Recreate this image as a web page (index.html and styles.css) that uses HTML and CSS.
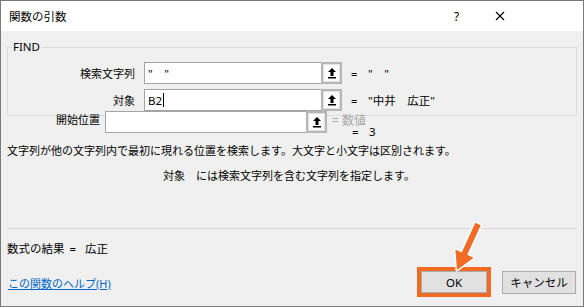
FILE: index.html
```html
<!DOCTYPE html>
<html lang="ja">
<head>
  <meta charset="UTF-8" />
  <title>関数の引数</title>
  <link rel="stylesheet" href="styles.css">
</head>
<body>
  <div class="window">
    <div class="titlebar">
      <span class="title">関数の引数</span>
      <span class="help-btn">?</span>
      <span class="close-btn">
        <svg width="10" height="10" viewBox="0 0 10 10"><path d="M1 1 L9 9 M9 1 L1 9" stroke="#000" stroke-width="1.1" fill="none"/></svg>
      </span>
    </div>

    <div class="content">
      <fieldset class="group">
        <legend>FIND</legend>
        <div class="arg-row">
          <label class="arg-label">検索文字列</label>
          <div class="arg-input">"　"</div>
          <div class="ref-btn">
            <svg width="10" height="12" viewBox="0 0 10 12"><path d="M5 1 L9 5 H6.5 V9 H3.5 V5 H1 Z" fill="#000"/><rect x="1" y="10" width="8" height="1.5" fill="#000"/></svg>
          </div>
          <span class="arg-eq">=</span>
          <span class="arg-value">"　"</span>
        </div>
        <div class="arg-row">
          <label class="arg-label">対象</label>
          <div class="arg-input">B2<span class="caret"></span></div>
          <div class="ref-btn">
            <svg width="10" height="12" viewBox="0 0 10 12"><path d="M5 1 L9 5 H6.5 V9 H3.5 V5 H1 Z" fill="#000"/><rect x="1" y="10" width="8" height="1.5" fill="#000"/></svg>
          </div>
          <span class="arg-eq">=</span>
          <span class="arg-value">"中井　広正"</span>
        </div>
      </fieldset>

      <div class="arg-row outer">
        <label class="arg-label short">開始位置</label>
        <div class="arg-input wide"></div>
        <div class="ref-btn">
          <svg width="10" height="12" viewBox="0 0 10 12"><path d="M5 1 L9 5 H6.5 V9 H3.5 V5 H1 Z" fill="#000"/><rect x="1" y="10" width="8" height="1.5" fill="#000"/></svg>
        </div>
        <div class="arg-stack">
          <div class="hint">= 数値</div>
          <div class="hint-value"><span class="arg-eq">=</span>3</div>
        </div>
      </div>

      <p class="desc">文字列が他の文字列内で最初に現れる位置を検索します。大文字と小文字は区別されます。</p>
      <p class="desc sub">対象　には検索文字列を含む文字列を指定します。</p>

      <div class="separator"></div>

      <div class="result">数式の結果 <span class="result-eq">=</span>広正</div>

      <div class="footer">
        <a class="help-link" href="#">この関数のヘルプ(H)</a>
        <div class="buttons">
          <div class="highlight"><button class="btn">OK</button></div>
          <button class="btn cancel">キャンセル</button>
        </div>
      </div>
    </div>

    <svg class="pointer" width="584" height="307" viewBox="0 0 584 307">
      <polygon points="480.7,225.2 467.2,254.8 473.6,257.7 457,270 455.4,249.4 461.8,252.4 475.3,222.8"
        fill="#f26b24" stroke="#fff" stroke-width="3" stroke-linejoin="round" paint-order="stroke"/>
    </svg>
  </div>
</body>
</html>
```

FILE: styles.css
```css
body {
  margin: 0;
  font-family: "Noto Sans", "Noto Sans CJK JP", sans-serif;
  font-size: 11px;
  color: #000;
  background: #fff;
}

.window {
  position: relative;
  width: 584px;
  height: 307px;
  box-sizing: border-box;
  border: 1px solid #7a7a7a;
  background: #f0f0f0;
  overflow: hidden;
}

.titlebar {
  height: 30px;
  background: #fff;
  display: flex;
  align-items: center;
  padding-left: 8px;
  font-size: 11.5px;
}

.title {
  flex-grow: 1;
}

.help-btn {
  width: 10px;
  margin-right: 31px;
  font-size: 12px;
}

.close-btn {
  width: 10px;
  margin-right: 78px;
  display: flex;
}

.content {
  padding: 0 6px;
}

.group {
  margin: 9px 0 0;
  padding: 0 4px 4px;
  border: 1px solid #dcdcdc;
  min-width: 0;
}

.group legend {
  padding: 0 1px;
  line-height: 14px;
  height: 14px;
  font-size: 11.5px;
}

.arg-row {
  display: flex;
  align-items: center;
  height: 22px;
}

.group .arg-row:first-of-type {
  margin-top: 8px;
}

.group .arg-row + .arg-row {
  margin-top: 5px;
}

.arg-label {
  width: 123px;
  margin-right: 9px;
  text-align: right;
}

.arg-label.short {
  width: 93px;
  margin-right: 5px;
}

.arg-input {
  width: 177px;
  height: 22px;
  box-sizing: border-box;
  border: 1px solid #a5a5a5;
  border-right: none;
  background: #fff;
  padding-left: 3px;
  display: flex;
  align-items: center;
  font-size: 11.5px;
}

.arg-input.wide {
  width: 201px;
}

.caret {
  display: inline-block;
  width: 1px;
  height: 14px;
  background: #000;
  margin-left: 1px;
}

.ref-btn {
  width: 21px;
  height: 22px;
  box-sizing: border-box;
  border: 2px solid #b6b6b6;
  background: #fbfbfb;
  box-shadow: inset 0 0 0 1px #e2e2e2;
  display: flex;
  align-items: center;
  justify-content: center;
}

.arg-eq {
  margin-left: 9px;
  width: 17px;
}

.arg-value {
  font-size: 11.5px;
}

.outer {
  margin-top: -5px;
  align-items: flex-start;
  height: 28px;
}

.arg-stack {
  margin-left: 5px;
  line-height: 11px;
}

.hint {
  color: #a8a8a8;
  margin-top: 4px;
  font-size: 12px;
}

.hint-value {
  margin-left: 10px;
  display: flex;
  font-size: 11.5px;
}

.hint-value .arg-eq {
  margin-left: 10px;
}

.desc {
  margin: 4px 0 0;
  line-height: 16px;
}

.desc.sub {
  margin-top: 9px;
  padding-left: 156px;
}

.separator {
  margin: 44px 0 0 1px;
  height: 1px;
  background: #d9d9d9;
}

.result {
  margin-top: 12px;
  line-height: 16px;
  font-size: 11.5px;
}

.result-eq {
  margin: 0 9px 0 2px;
}

.footer {
  margin-top: 10px;
  display: flex;
  justify-content: space-between;
  align-items: center;
  height: 30px;
  padding-left: 1px;
}

.help-link {
  color: #0066cc;
  text-decoration: underline;
  margin-top: 2px;
}

.buttons {
  display: flex;
  align-items: center;
  gap: 11px;
  margin-right: 1px;
}

.highlight {
  border: 4px solid #f26b24;
  display: flex;
}

.btn {
  width: 66px;
  height: 22px;
  border: 1px solid #adadad;
  background: #e1e1e1;
  font-family: "Noto Sans", "Noto Sans CJK JP", sans-serif;
  font-size: 11.5px;
  color: #000;
  padding: 0;
}

.btn.cancel {
  width: 74px;
  height: 23px;
}

.pointer {
  position: absolute;
  left: -1px;
  top: -1px;
}
```
